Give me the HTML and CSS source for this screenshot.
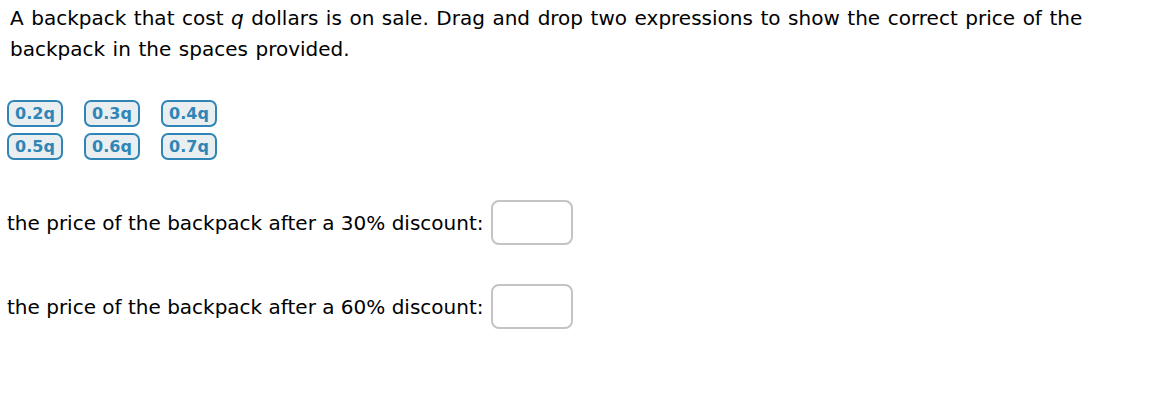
FILE: index.html
```html
<!DOCTYPE html>
<html>
<head>
<meta charset="utf-8">
<link rel="stylesheet" href="styles.css">
</head>
<body>
<div class="page">
  <p class="question">A backpack that cost <i>q</i> dollars is on sale. Drag and drop two expressions to show the correct price of the backpack in the spaces provided.</p>
  <div class="chips">
    <span class="chip">0.2q</span>
    <span class="chip">0.3q</span>
    <span class="chip">0.4q</span>
    <span class="chip">0.5q</span>
    <span class="chip">0.6q</span>
    <span class="chip">0.7q</span>
  </div>
  <div class="row row-first">
    <span class="label">the price of the backpack after a 30% discount:</span>
    <span class="drop"></span>
  </div>
  <div class="row row-second">
    <span class="label">the price of the backpack after a 60% discount:</span>
    <span class="drop"></span>
  </div>
</div>
</body>
</html>
```
FILE: styles.css
```css
html, body {
  margin: 0;
  padding: 0;
  background: #fff;
}
body {
  font-family: "DejaVu Sans", sans-serif;
  color: #000;
}
.page {
  padding: 0 0 0 7px;
}
.question {
  margin: 0;
  padding: 3px 0 0 3px;
  font-size: 20px;
  line-height: 31px;
  word-spacing: 1.2px;
  width: 1100px;
}
.chips {
  display: grid;
  grid-template-columns: repeat(3, 56px);
  column-gap: 21px;
  row-gap: 6px;
  margin-top: 35px;
}
.chip {
  box-sizing: border-box;
  height: 27px;
  border: 2px solid #2f86b6;
  border-radius: 7px;
  background: #e9eef1;
  color: #2f86b6;
  font-weight: bold;
  font-size: 16px;
  line-height: 23px;
  text-align: center;
}
.row {
  display: flex;
  align-items: center;
  gap: 8px;
}
.row-first {
  margin-top: 40px;
}
.row-second {
  margin-top: 39px;
}
.label {
  font-size: 20px;
}
.drop {
  box-sizing: border-box;
  flex: 0 0 82px;
  width: 82px;
  height: 45px;
  border: 2px solid #c4c4c4;
  border-radius: 8px;
  background: #fff;
}
```
